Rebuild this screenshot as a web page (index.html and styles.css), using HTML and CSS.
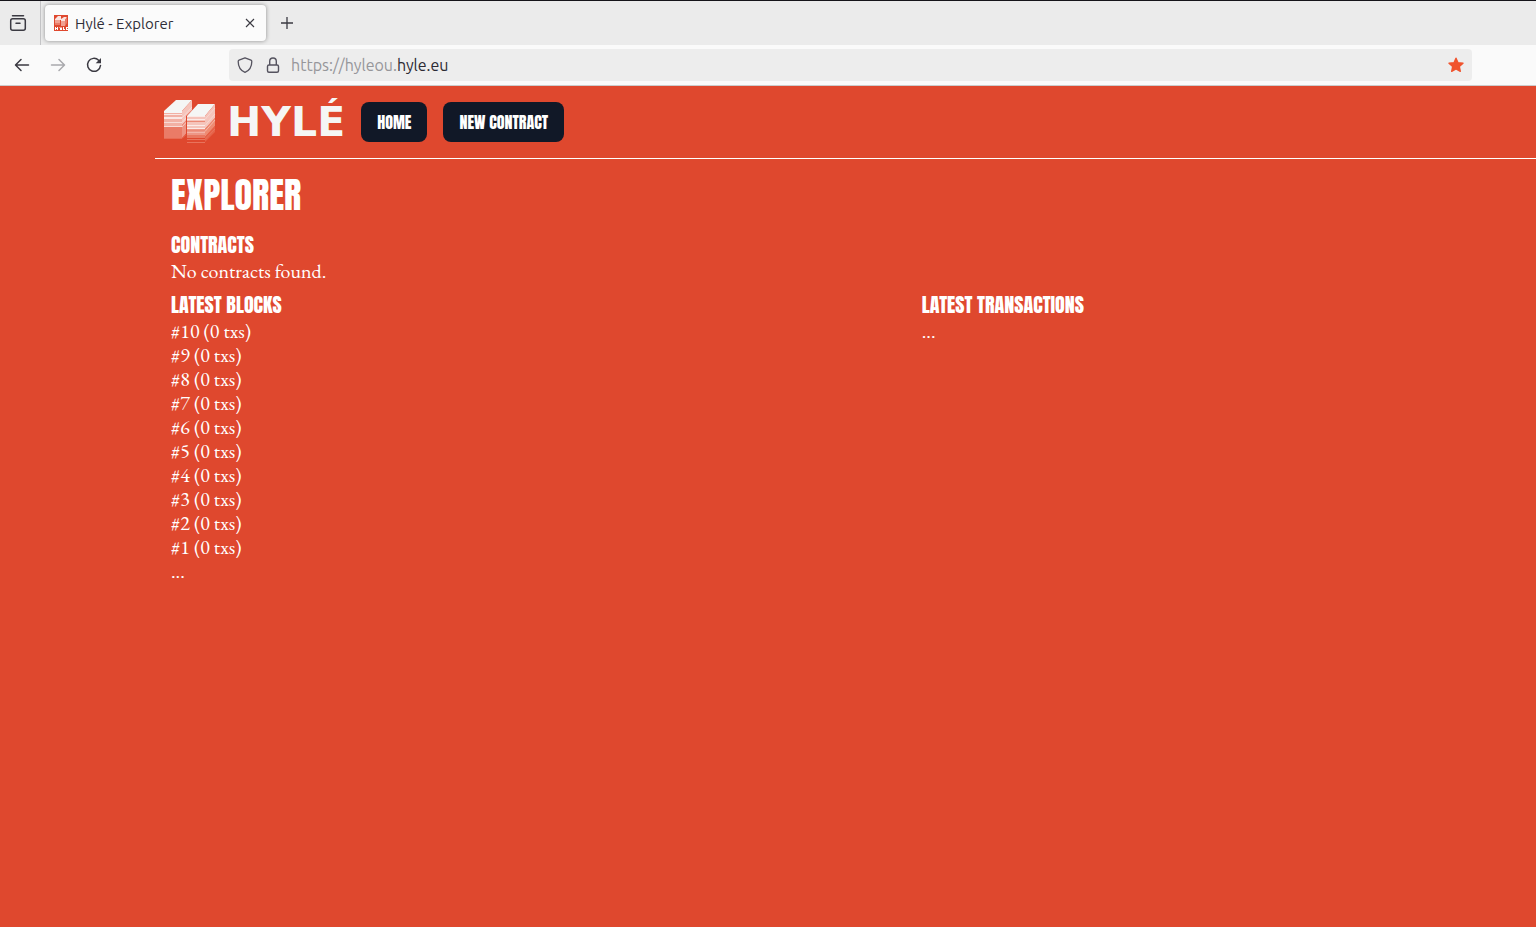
FILE: index.html
```html
<!DOCTYPE html>
<html lang="en">
<head>
<meta charset="utf-8">
<title>Hylé - Explorer</title>
<link rel="stylesheet" href="styles.css">
</head>
<body>
<div class="tabbar">
  <button class="icon-btn recent" aria-label="Firefox View">
    <svg width="18" height="18" viewBox="0 0 18 18" fill="none" stroke="#3b3a42" stroke-width="1.5" stroke-linecap="round"><path d="M3.5 1.7h11"/><rect x="1.7" y="4.7" width="14.6" height="11.6" rx="2"/><path d="M7 9.2h4"/></svg>
  </button>
  <div class="tab">
    <svg width="16" height="16" viewBox="0 0 16 16"><path fill="#df482e" d="M1 0h14v16H1z"/><path fill="#fbe3df" d="M2 4l3-3h3v3l3-2h3l-2 3v1H8V5H2z"/><path fill="#f0a192" d="M2 5h5v5H2zM8 6h4v5H8z"/><path fill="#ea7b67" d="M12 5l2-3v6l-2 3zM2 8h5v2H2z"/><path fill="#fff" d="M2 12h1v1h1v-1h1v3H4v-1H3v1H2zM6 12h1l1 1 1-1v3H7v-2zM10 12h1v2h1v1h-2zM13 12h2v1h-1v1h1v1h-2z"/></svg>
    <span class="tab-title">Hylé - Explorer</span>
    <button class="icon-btn close" aria-label="Close tab">
      <svg width="10" height="10" viewBox="0 0 10 10" stroke="#3b3a42" stroke-width="1.1"><path d="M1 1l8 8M9 1L1 9"/></svg>
    </button>
  </div>
  <button class="icon-btn new-tab" aria-label="New tab">
    <svg width="14" height="14" viewBox="0 0 14 14" stroke="#3b3a42" stroke-width="1.3"><path d="M7 1v12M1 7h12"/></svg>
  </button>
</div>
<div class="toolbar">
  <div class="nav-buttons">
    <button class="icon-btn" aria-label="Back"><svg width="16" height="16" viewBox="0 0 16 16" fill="none" stroke="#3b3a42" stroke-width="1.5" stroke-linecap="round" stroke-linejoin="round"><path d="M14.500 8H1.800M7 2.500L1.500 8 7 13.500"/></svg></button>
    <button class="icon-btn" aria-label="Forward" disabled><svg width="16" height="16" viewBox="0 0 16 16" fill="none" stroke="#a9a9ad" stroke-width="1.5" stroke-linecap="round" stroke-linejoin="round"><path d="M1.500 8h12.700M9 2.500L14.500 8 9 13.500"/></svg></button>
    <button class="icon-btn" aria-label="Reload"><svg width="16" height="16" viewBox="0 0 16 16" fill="none" stroke="#3b3a42" stroke-width="1.5" stroke-linecap="round"><path d="M12.600 3.200A6.500 6.500 0 1 0 14.500 8.500"/><path d="M15 1v5.300H9.700z" fill="#3b3a42" stroke="none"/></svg></button>
  </div>
  <div class="urlbar">
    <div class="site-icons">
      <svg width="16" height="16" viewBox="0 0 16 16" fill="none" stroke="#55535f" stroke-width="1.3" stroke-linejoin="round"><path d="M8 .8l6 2.400q.8.300.8 1.200c0 5-2.300 9-6.800 10.900C3.500 13.400 1.200 9.400 1.200 4.400q0-.9.800-1.200z"/></svg>
      <svg width="16" height="16" viewBox="0 0 16 16" fill="none" stroke="#55535f" stroke-width="1.4"><rect x="2.500" y="8" width="11" height="7.300" rx="1.500"/><path d="M4.700 8V4.300a3.300 3.300 0 0 1 6.600 0V8"/></svg>
    </div>
    <span class="url">https://hyleou.<b class="domain">hyle.eu</b></span>
    <button class="icon-btn star" aria-label="Bookmark this page"><svg width="16" height="16" viewBox="0 0 16 16" fill="#f0532d" stroke="#f0532d" stroke-width="1.400" stroke-linejoin="round"><path d="M8 1.200l2 4.500 5 .5-3.700 3.300 1 4.800L8 11.900l-4.300 2.400 1-4.800L1 6.200l5-.5z"/></svg></button>
  </div>
</div>
<div class="page">
  <header class="site-header">
    <a class="logo" href="#">
      <svg width="54" height="46" viewBox="0 0 54 46">
        <path fill="#f5f6f5" d="M1 12L13 1h16L19 12z"/>
        <path fill="#f5f6f5" d="M1 12h18v2H1z"/>
        <path fill="#f2b0a4" d="M1 14h18v14H1z"/>
        <path fill="#ea7b67" d="M1 28h18v11H1z"/>
        <path fill="#f5c4bb" d="M19 14v-2L29 1v14L19 26z"/>
        <path fill="#ee9383" d="M19 26l10-11v13L19 39z"/>
        <path fill="#fae7e4" d="M1 15h18v1H1zM1 18h18v2H1z"/>
        <path fill="#f8dad5" d="M1 23h18v1H1zM1 27h18v1H1z"/>
        <path stroke="#fae7e4" fill="none" opacity=".6" d="M19 19L29 8M19 23.500l10-11M19 28l10-11"/>
        <path stroke="#e86b54" fill="none" d="M1 39.500h18l4-4"/>
        <path fill="#df482e" d="M23 17L35 5v39H23z"/>
        <path fill="#f5f6f5" d="M24 17L35 5h17L42 17z"/>
        <path fill="#f5c4bb" d="M24 17h18v13H24z"/>
        <path fill="#ee9686" d="M24 30h18v6H24z"/>
        <path fill="#e97861" d="M24 36h18v3H24z"/>
        <path fill="#f5c4bb" d="M42 17L52 5v14L42 30z"/>
        <path fill="#ee8b72" d="M42 30l10-11v8L42 38z"/>
        <path fill="#e66248" d="M42 38l10-11v6L42 43z"/>
        <path fill="#fbeae7" d="M24 17h18v1H24zM24 20h18v1H24zM24 26h18v1H24zM24 29h18v1H24z"/>
        <path fill="#eb8976" d="M24 22h18v1H24zM24 31h18v1H24z"/>
        <path fill="#f3b5a9" d="M24 33h18v1H24z"/>
        <path stroke="#fae7e4" fill="none" opacity=".5" d="M42 20.500L52 9M42 26.500L52 15M42 32.500L52 21"/>
        <path stroke="#e9735c" fill="none" d="M24 40.500h18L52 30M24 43.500h18"/>
      </svg>
      <span class="wordmark">HYLÉ</span>
    </a>
    <nav class="menu">
      <a class="menu-link" href="#">HOME</a>
      <a class="menu-link" href="#">NEW CONTRACT</a>
    </nav>
  </header>
  <main class="content">
    <h1 class="title">EXPLORER</h1>
    <section class="block">
      <h2 class="heading">CONTRACTS</h2>
      <p class="message">No contracts found.</p>
    </section>
    <div class="columns">
      <section>
        <h2 class="heading">LATEST BLOCKS</h2>
        <ul class="list">
          <li>#10 (0 txs)</li>
          <li>#9 (0 txs)</li>
          <li>#8 (0 txs)</li>
          <li>#7 (0 txs)</li>
          <li>#6 (0 txs)</li>
          <li>#5 (0 txs)</li>
          <li>#4 (0 txs)</li>
          <li>#3 (0 txs)</li>
          <li>#2 (0 txs)</li>
          <li>#1 (0 txs)</li>
          <li>...</li>
        </ul>
      </section>
      <section>
        <h2 class="heading">LATEST TRANSACTIONS</h2>
        <p class="list">...</p>
      </section>
    </div>
  </main>
</div>
</body>
</html>
```
FILE: styles.css
```css
* { box-sizing: border-box; }
body {
  margin: 0;
  min-height: 100vh;
  display: flex;
  flex-direction: column;
  background: #df482e;
  font-family: Ubuntu, "Noto Sans", sans-serif;
}
h1, h2, p, ul { margin: 0; padding: 0; }
.icon-btn {
  display: flex;
  align-items: center;
  justify-content: center;
  padding: 0;
  border: 0;
  background: none;
}
.tabbar {
  display: flex;
  align-items: center;
  height: 45px;
  background: #ebebeb;
  border-top: 1px solid #15141a;
}
.recent {
  width: 41px;
  height: 44px;
  padding-right: 4px;
  border-right: 1px solid #c4c4c6;
}
.tab {
  display: flex;
  align-items: center;
  gap: 6px;
  width: 221px;
  height: 36px;
  margin-left: 4px;
  padding: 0 8px;
  border-radius: 4px;
  background: #fbfbfb;
  box-shadow: 0 0 4px rgba(0, 0, 0, 0.4);
}
.tab-title {
  flex: 1;
  color: #2f2e38;
  font-size: 15px;
}
.close { width: 16px; height: 16px; }
.new-tab { width: 42px; height: 36px; }
.toolbar {
  display: flex;
  align-items: center;
  height: 41px;
  padding: 0 64px 0 14px;
  background: #fafafa;
  border-bottom: 1px solid #cccccc;
}
.nav-buttons {
  display: flex;
  gap: 20px;
  width: 215px;
}
.urlbar {
  flex: 1;
  display: flex;
  align-items: center;
  gap: 10px;
  height: 32px;
  padding: 0 8px;
  border-radius: 4px;
  background: #ededed;
}
.site-icons {
  display: flex;
  gap: 12px;
}
.url {
  flex: 1;
  color: #96969a;
  font-size: 16px;
}
.domain {
  color: #2b2a33;
  font-weight: 400;
}
.page {
  flex: 1;
  padding-left: 155px;
  color: #ffffff;
}
.site-header {
  display: flex;
  align-items: center;
  gap: 16px;
  height: 73px;
  padding: 0 8px;
  border-bottom: 1px solid #ffffff;
}
.logo {
  display: flex;
  align-items: center;
  gap: 10px;
  color: #f5f6f5;
  text-decoration: none;
}
.wordmark {
  font: 700 41px/46px "DejaVu Sans", sans-serif;
}
.menu { display: flex; gap: 16px; }
.menu-link {
  padding: 8px 16px;
  border-radius: 8px;
  background: #111827;
  color: #ffffff;
  font: 400 16px/24px Anton, "Liberation Sans Narrow", sans-serif;
  text-decoration: none;
}
.content { padding: 16px 0 0 16px; }
.title {
  margin-bottom: 16px;
  font: 400 36px/40px Anton, "Liberation Sans Narrow", sans-serif;
}
.heading {
  font: 400 20px/28px Anton, "Liberation Sans Narrow", sans-serif;
}
.block { margin-bottom: 8px; }
.message,
.list {
  font: 20px/24px "EB Garamond", "Liberation Serif", serif;
}
.columns {
  display: grid;
  grid-template-columns: 55fr 45fr;
}
.list { list-style: none; }
```
